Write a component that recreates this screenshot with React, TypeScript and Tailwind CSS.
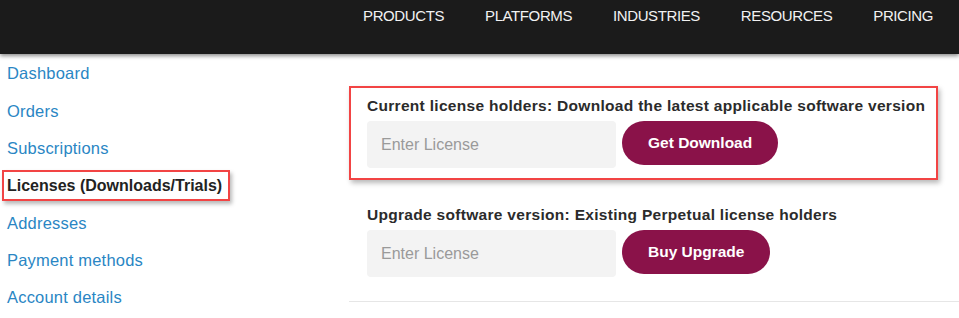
const navItems = ["Products", "Platforms", "Industries", "Resources", "Pricing"];

const accountLinks = [
  "Dashboard",
  "Orders",
  "Subscriptions",
  "Licenses (Downloads/Trials)",
  "Addresses",
  "Payment methods",
  "Account details",
];

function LicenseForm({ title, action }: { title: string; action: string }) {
  return (
    <div>
      <h3 className="whitespace-nowrap text-[15.5px] font-bold leading-[20px] tracking-[0.3px] text-[#2b2b2b]">
        {title}
      </h3>
      <div className="mt-[5px] flex items-start gap-[6px]">
        <input
          placeholder="Enter License"
          className="h-[47px] w-[249px] rounded-[4px] bg-[#f3f3f3] px-[14px] text-[16px] text-[#333] outline-none placeholder:text-[#9a9a9a]"
        />
        <button className="h-[44px] rounded-full bg-[#8a1249] px-[26px] text-[15.5px] font-bold text-white">
          {action}
        </button>
      </div>
    </div>
  );
}

export default function App() {
  return (
    <div className="h-[318px] w-[959px] overflow-hidden bg-white font-['Liberation_Sans',Arial,sans-serif]">
      <header className="relative z-10 h-[54px] bg-[#1b1b1b] shadow-[0_2px_4px_rgba(0,0,0,0.45)]">
        <nav className="flex justify-end gap-[41px] pr-[26px] pt-[6px]">
          {navItems.map((item) => (
            <a
              key={item}
              className="text-[15px] uppercase leading-[20px] tracking-[-0.4px] text-[#f2f2f2]"
            >
              {item}
            </a>
          ))}
        </nav>
      </header>

      <div className="flex">
        <aside className="w-[349px] shrink-0 pl-[7px] pt-[1px]">
          <ul>
            {accountLinks.map((link, index) =>
              index === 3 ? (
                <li key={link} className="flex h-[37.33px] items-center">
                  <span className="-ml-[5px] inline-block border-2 border-[#f24444] pl-[3px] pr-[6px] text-[16px] font-bold leading-[27px] text-[#222] shadow-[2px_3px_4px_rgba(0,0,0,0.28)]">
                    {link}
                  </span>
                </li>
              ) : (
                <li
                  key={link}
                  className="flex h-[37.33px] items-center text-[16.5px] tracking-[0.2px] text-[#2a86c4]"
                >
                  {link}
                </li>
              ),
            )}
          </ul>
        </aside>

        <main className="min-w-0 flex-1 pt-[32px]">
          <div className="mr-[21px] border-2 border-[#f24444] px-[16px] pb-[10px] pt-[8px] shadow-[2px_3px_5px_rgba(0,0,0,0.28)]">
            <LicenseForm
              title="Current license holders: Download the latest applicable software version"
              action="Get Download"
            />
          </div>
          <div className="px-[18px] pt-[25px]">
            <LicenseForm
              title="Upgrade software version: Existing Perpetual license holders"
              action="Buy Upgrade"
            />
          </div>
          <hr className="mt-[24px] border-t border-[#e6e6e6]" />
        </main>
      </div>
    </div>
  );
}
